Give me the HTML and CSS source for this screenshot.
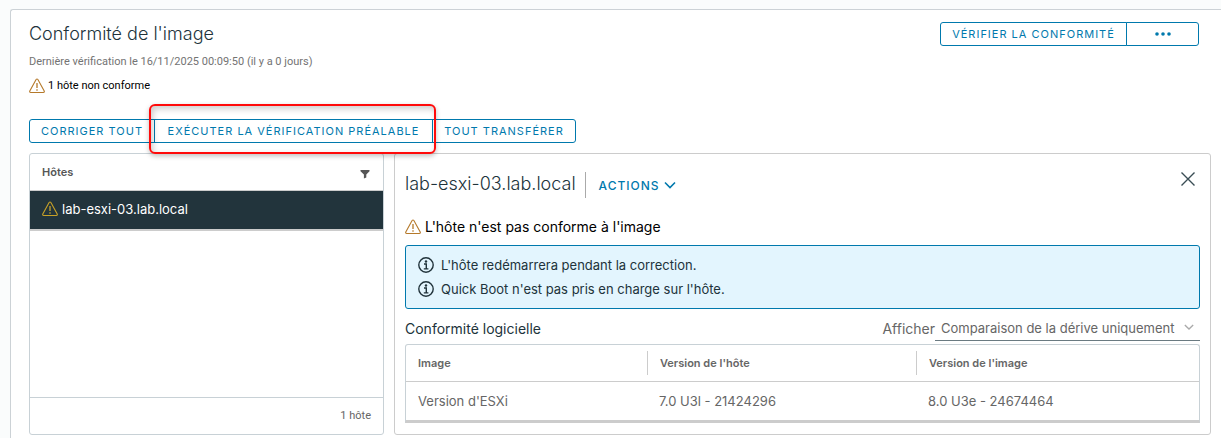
FILE: index.html
```html
<!DOCTYPE html>
<html lang="fr">
    <head>
        <meta charset="utf-8">
        <title>Conformité de l'image</title>
        <link rel="stylesheet" href="styles.css">
    </head>
    <body>
    <svg class="defs" width="0" height="0">
        <symbol id="warning" viewBox="0 0 16 16">
            <path d="M7.1 1.5 L0.8 13 Q0.3 14.4 1.7 14.5 H14.3 Q15.7 14.4 15.2 13 L8.9 1.5 Q8 0.4 7.1 1.5 Z" fill="none" stroke="currentColor" stroke-width="1.1"/>
            <path d="M8 5 V10 M8 11.3 V12.7" fill="none" stroke="currentColor" stroke-width="1.3"/>
        </symbol>
        <symbol id="info" viewBox="0 0 16 16">
            <circle cx="8" cy="8" r="7.2" fill="none" stroke="currentColor" stroke-width="1.4"/>
            <circle cx="8" cy="4.5" r="1.2" fill="currentColor"/>
            <path d="M6 7 H8.3 V11.7 M5.8 11.9 H10.4" fill="none" stroke="currentColor" stroke-width="1.4"/>
        </symbol>
        <symbol id="chevron" viewBox="0 0 12 12">
            <path d="M1 3.5 L6 8.5 L11 3.5" fill="none" stroke="currentColor" stroke-width="1.6"/>
        </symbol>
    </svg>
    <main class="card">
        <header class="cardHead">
            <div>
                <h1>Conformité de l'image</h1>
                <p class="lastCheck">Dernière vérification le 16/11/2025 00:09:50 (il y a 0 jours)</p>
                <p class="summary"><svg class="icon"><use href="#warning"/></svg>1 hôte non conforme</p>
            </div>
            <div class="btnGroup">
                <button type="button" class="btn check">Vérifier la conformité</button>
                <button type="button" class="btn more" aria-label="Plus">
                    <svg width="16" height="4" viewBox="0 0 16 4"><circle cx="2" cy="2" r="1.8"/><circle cx="8" cy="2" r="1.8"/><circle cx="14" cy="2" r="1.8"/></svg>
                </button>
            </div>
        </header>
        <div class="btnGroup toolbar">
            <button type="button" class="btn fix">Corriger tout</button>
            <button type="button" class="btn precheck">Exécuter la vérification préalable</button>
            <button type="button" class="btn stage">Tout transférer</button>
        </div>
        <div class="panels">
            <section class="hosts">
                <table>
                    <thead>
                        <tr><th><div class="hostsHead">Hôtes
                            <button type="button" class="iconBtn filter" aria-label="Filtrer"><svg width="10" height="10" viewBox="0 0 10 10"><path d="M0.5 1 H9.5 V2.3 L6.3 5.5 V8.4 L3.9 9.6 V5.5 L0.5 2.3 Z"/></svg></button>
                        </div></th></tr>
                    </thead>
                    <tbody>
                        <tr class="selected"><td><div class="host"><svg class="icon"><use href="#warning"/></svg>lab-esxi-03.lab.local</div></td></tr>
                    </tbody>
                </table>
                <footer>1 hôte</footer>
            </section>
            <section class="detail">
                <header class="detailHead">
                    <h2>lab-esxi-03.lab.local</h2>
                    <button type="button" class="actions">Actions<svg width="12" height="12"><use href="#chevron"/></svg></button>
                    <button type="button" class="iconBtn close" aria-label="Fermer"><svg width="14" height="14" viewBox="0 0 14 14"><path d="M0.5 0.5 L13.5 13.5 M13.5 0.5 L0.5 13.5" fill="none" stroke="currentColor" stroke-width="1.4"/></svg></button>
                </header>
                <p class="status"><svg class="icon"><use href="#warning"/></svg>L'hôte n'est pas conforme à l'image</p>
                <ul class="alert">
                    <li><svg class="icon"><use href="#info"/></svg>L'hôte redémarrera pendant la correction.</li>
                    <li><svg class="icon"><use href="#info"/></svg>Quick Boot n'est pas pris en charge sur l'hôte.</li>
                </ul>
                <div class="softHead">
                    <h3>Conformité logicielle</h3>
                    <label for="show">Afficher</label>
                    <div class="select">
                        <select id="show"><option>Comparaison de la dérive uniquement</option></select>
                        <svg width="10" height="10"><use href="#chevron"/></svg>
                    </div>
                </div>
                <table class="versions">
                    <thead>
                        <tr><th class="colImage"><span>Image</span></th><th class="colHost"><span>Version de l'hôte</span></th><th><span>Version de l'image</span></th></tr>
                    </thead>
                    <tbody>
                        <tr><td>Version d'ESXi</td><td>7.0 U3l - 21424296</td><td>8.0 U3e - 24674464</td></tr>
                    </tbody>
                </table>
            </section>
        </div>
    </main>
    </body>
</html>
```
FILE: styles.css
```css
*{box-sizing:border-box;}
body{
    margin:0;
    padding:9px 0 0 10px;
    background-color:#fafcfc;
    color:#21333b;
    font-family:Inter, "Noto Sans", sans-serif;
    font-size:13px;
    line-height:24px;
}
h1,h2,h3,p,ul{margin:0;padding:0;font-weight:400;}
button,select{font-family:inherit;cursor:pointer;}
table{width:100%;border-spacing:0;}
th,td{padding:0;text-align:left;}
.defs{position:absolute;}
.icon{width:16px;height:16px;flex:none;}
.card{
    padding:12px 10px 3px 18px;
    background-color:#fff;
    border:1px solid #ccd2d6;
    border-width:1px 0 0 1px;
    border-top-left-radius:3px;
}
.cardHead{
    display:flex;
    justify-content:space-between;
    align-items:flex-start;
    padding-right:12px;
}
h1,h2{font-size:18px;font-weight:300;}
.lastCheck,.summary,.hosts footer{font-family:Roboto, "Noto Sans", sans-serif;font-size:11px;}
.lastCheck{margin-top:4px;color:#737373;}
.summary{
    display:flex;
    align-items:center;
    gap:3px;
    color:#000;
}
.summary .icon,.status .icon{color:#b5792a;}
.btnGroup{display:flex;}
.btn{
    height:24px;
    padding:0;
    background-color:#fff;
    border:1px solid #0079ad;
    color:#0079ad;
    font-size:11px;
    letter-spacing:1px;
    line-height:22px;
    text-transform:uppercase;
    white-space:nowrap;
}
.btn + .btn{margin-left:-1px;}
.btn:first-child{border-radius:3px 0 0 3px;}
.btn:last-child{border-radius:0 3px 3px 0;}
.btn svg{display:block;margin:0 auto;fill:currentColor;}
.check{width:187px;}
.more{width:73px;}
.toolbar{margin-top:21px;}
.fix{width:126px;}
.precheck{position:relative;z-index:1;width:279px;}
.stage{width:144px;}
.precheck::after{
    content:"";
    position:absolute;
    top:-16px;
    right:-4px;
    bottom:-12px;
    left:-6px;
    border:2px solid #ff0a0a;
    border-radius:6px;
    box-shadow:0 2px 5px rgba(0,0,0,.25), inset 2px 3px 6px rgba(0,0,0,.2);
}
.panels{
    display:flex;
    gap:10px;
    margin-top:10px;
}
.hosts,.detail{border:1px solid #ccc;border-radius:3px;}
.hosts{
    display:flex;
    flex-direction:column;
    flex:0 0 355px;
    border-color:#c8d1d6;
}
.hostsHead,.host{
    display:flex;
    align-items:center;
    height:37px;
    padding:0 12px;
}
.hostsHead{
    justify-content:space-between;
    border-bottom:1px solid #ccc;
    color:#565656;
    font-size:11px;
    font-weight:600;
}
.iconBtn{
    display:flex;
    padding:0;
    background:none;
    border:0;
}
.filter{padding:3px 1px 0;}
.filter svg{fill:#565656;}
.host{
    gap:4px;
    height:40px;
    padding-bottom:2px;
    background-color:#22343c;
    border-bottom:2px solid #ccc;
    color:#fff;
    font-size:13px;
}
.host .icon{color:#c9a227;}
.hosts footer{
    margin-top:auto;
    padding:6px 12px;
    border-top:1px solid #c8d1d6;
    color:#666;
    text-align:right;
}
.detail{
    flex:1;
    min-width:0;
    padding:18px 10px 11px;
}
.detailHead{display:flex;align-items:flex-start;}
.actions{
    display:flex;
    align-items:center;
    gap:4px;
    height:26px;
    margin-left:9px;
    padding:0 0 0 13px;
    background:none;
    border:0;
    border-left:1px solid #aaa;
    color:#0079ad;
    font-size:12px;
    font-weight:500;
    letter-spacing:1px;
    text-transform:uppercase;
}
.close{margin:0 5px 0 auto;color:#3a4d55;}
.status{
    display:flex;
    align-items:center;
    gap:4px;
    margin-top:17px;
    color:#000;
    font-size:14px;
}
.alert{
    margin-top:6px;
    padding:7px 12px;
    background-color:#e3f5fe;
    border:1px solid #0079ad;
    border-radius:3px;
    list-style:none;
}
.alert li{
    display:flex;
    align-items:center;
    gap:7px;
}
.softHead{
    display:flex;
    align-items:center;
    margin-top:7px;
    padding-bottom:3px;
}
h3{flex:1;font-size:14px;}
.softHead label{color:#666;font-size:14px;}
.select{
    position:relative;
    border-bottom:1px solid #6a7a81;
    color:#666;
}
.select select{
    display:block;
    width:265px;
    height:24px;
    padding:0 24px 0 6px;
    appearance:none;
    background:none;
    border:0;
    color:inherit;
    font-size:13px;
}
.select svg{
    position:absolute;
    top:6px;
    right:6px;
    color:#aaa;
    pointer-events:none;
}
.versions{
    table-layout:fixed;
    border:1px solid #c8d1d6;
    border-bottom:3px solid #ccc;
    border-radius:3px 3px 0 0;
    color:#666;
}
.colImage{width:241px;}
.colHost{width:269px;}
.versions th{
    height:37px;
    border-bottom:1px solid #ccc;
    font-size:11px;
    font-weight:600;
}
.versions th span{
    display:block;
    padding-left:12px;
    border-left:1px solid #ccc;
}
.versions th:first-child span{border-left:0;}
.versions td{height:38px;padding-left:12px;}
```
